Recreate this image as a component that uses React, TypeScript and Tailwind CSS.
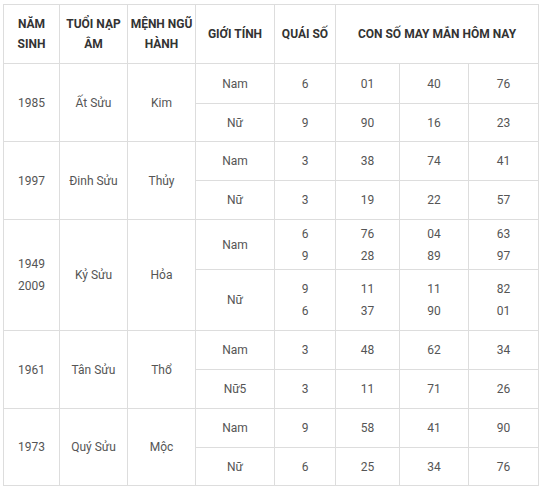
import React from "react";

type Sub = { g: string; q: string[]; n: string[][]; h: string };
type Grp = { y: string[]; t: string; m: string; rows: Sub[] };

const data: Grp[] = [
  {
    y: ["1985"], t: "Ất Sửu", m: "Kim",
    rows: [
      { g: "Nam", q: ["6"], n: [["01"], ["40"], ["76"]], h: "h-[40px]" },
      { g: "Nữ", q: ["9"], n: [["90"], ["16"], ["23"]], h: "h-[38px]" },
    ],
  },
  {
    y: ["1997"], t: "Đinh Sửu", m: "Thủy",
    rows: [
      { g: "Nam", q: ["3"], n: [["38"], ["74"], ["41"]], h: "h-[39px]" },
      { g: "Nữ", q: ["3"], n: [["19"], ["22"], ["57"]], h: "h-[39px]" },
    ],
  },
  {
    y: ["1949", "2009"], t: "Kỷ Sửu", m: "Hỏa",
    rows: [
      { g: "Nam", q: ["6", "9"], n: [["76", "28"], ["04", "89"], ["63", "97"]], h: "h-[50px]" },
      { g: "Nữ", q: ["9", "6"], n: [["11", "37"], ["11", "90"], ["82", "01"]], h: "h-[61px]" },
    ],
  },
  {
    y: ["1961"], t: "Tân Sửu", m: "Thổ",
    rows: [
      { g: "Nam", q: ["3"], n: [["48"], ["62"], ["34"]], h: "h-[39px]" },
      { g: "Nữ5", q: ["3"], n: [["11"], ["71"], ["26"]], h: "h-[39px]" },
    ],
  },
  {
    y: ["1973"], t: "Quý Sửu", m: "Mộc",
    rows: [
      { g: "Nam", q: ["9"], n: [["58"], ["41"], ["90"]], h: "h-[39px]" },
      { g: "Nữ", q: ["6"], n: [["25"], ["34"], ["76"]], h: "h-[38px]" },
    ],
  },
];

const td = "border-r border-b border-[#dddddd] p-0 text-center align-middle";
const th = "border-r border-b border-[#dddddd] p-0 text-center align-middle font-bold text-[#333333]";

function Lines({ v }: { v: string[] }) {
  return (
    <>
      {v.map((s, i) => (
        <div key={i} className="leading-[22px]">{s}</div>
      ))}
    </>
  );
}

export default function App() {
  return (
    <div className="w-[542px] h-[490px] bg-white pl-[3px] pt-[4px]" style={{ fontFamily: "Roboto, 'Noto Sans', sans-serif" }}>
      <table className="table-fixed border-separate border-spacing-0 border-l border-t border-[#dddddd] w-[536px] text-[12px] text-[#555555]">
        <colgroup>
          <col className="w-[56px]" />
          <col className="w-[68px]" />
          <col className="w-[68px]" />
          <col className="w-[79px]" />
          <col className="w-[61px]" />
          <col className="w-[64px]" />
          <col className="w-[69px]" />
          <col className="w-[70px]" />
        </colgroup>
        <thead>
          <tr className="h-[59px]">
            <th className={th + " leading-[20px]"}>NĂM<br />SINH</th>
            <th className={th + " leading-[20px]"}>TUỔI NẠP<br />ÂM</th>
            <th className={th + " leading-[20px]"}>MỆNH NGŨ<br />HÀNH</th>
            <th className={th}>GIỚI TÍNH</th>
            <th className={th}>QUÁI SỐ</th>
            <th className={th} colSpan={3}>CON SỐ MAY MẮN HÔM NAY</th>
          </tr>
        </thead>
        <tbody>
          {data.map((g, gi) =>
            g.rows.map((r, ri) => (
              <tr key={gi + "-" + ri} className={r.h}>
                {ri === 0 && (
                  <>
                    <td className={td} rowSpan={2}><Lines v={g.y} /></td>
                    <td className={td} rowSpan={2}>{g.t}</td>
                    <td className={td} rowSpan={2}>{g.m}</td>
                  </>
                )}
                <td className={td}>{r.g}</td>
                <td className={td}><Lines v={r.q} /></td>
                {r.n.map((c, ci) => (
                  <td key={ci} className={td}><Lines v={c} /></td>
                ))}
              </tr>
            ))
          )}
        </tbody>
      </table>
    </div>
  );
}
